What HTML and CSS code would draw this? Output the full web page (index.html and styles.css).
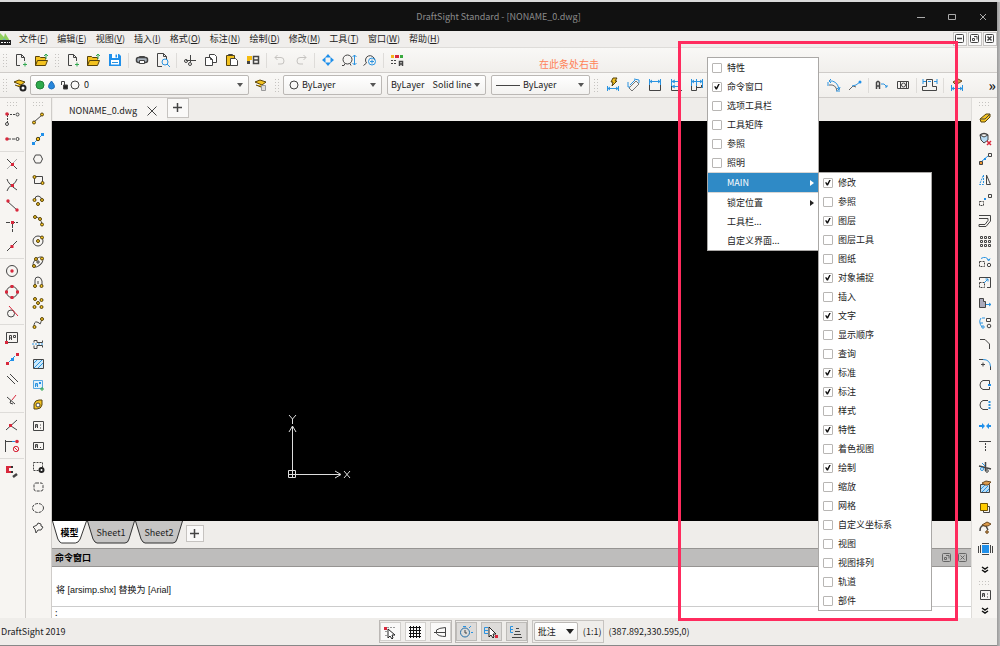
FILE: index.html
```html
<!DOCTYPE html>
<html lang="zh-CN">
<head>
<meta charset="utf-8">
<title>DraftSight Standard - [NONAME_0.dwg]</title>
<link rel="stylesheet" href="styles.css">
</head>
<body>
<div class="desktop">
<div class="app">
  <header class="titlebar">
    <h1>DraftSight Standard - [NONAME_0.dwg]</h1>
    <div class="win-buttons">
      <button aria-label="最小化"><svg viewBox="0 0 16 16"><path d="M4 8.500h8"/></svg></button>
      <button aria-label="最大化"><svg viewBox="0 0 16 16"><path d="M4.500 5.500h7v5h-7z"/></svg></button>
      <button aria-label="关闭"><svg viewBox="0 0 16 16"><path d="M5 5l6 6M11 5l-6 6"/></svg></button>
    </div>
  </header>

  <nav class="menubar">
    <svg class="logo" viewBox="0 0 12 14"><path fill="#8fcf5c" stroke="none" d="M0 1l4 4 1-4 5 8H0z"/><path fill="#62a7d8" stroke="none" d="M4 6l3 4H2z"/><rect x="0" y="8" width="11" height="5" fill="#222" stroke="none"/><path stroke="#fff" d="M1 10.500h2m1 0h2m1 0h1m1 0h1"/></svg>
    <div class="menus"><button>文件(<u>F</u>)</button><button>编辑(<u>E</u>)</button><button>视图(<u>V</u>)</button><button>插入(<u>I</u>)</button><button>格式(<u>O</u>)</button><button>标注(<u>N</u>)</button><button>绘制(<u>D</u>)</button><button>修改(<u>M</u>)</button><button>工具(<u>T</u>)</button><button>窗口(<u>W</u>)</button><button>帮助(<u>H</u>)</button></div>
    <div class="doc-buttons">
      <button aria-label="最小化文档"><svg viewBox="0 0 10 10"><rect x=".5" y=".5" width="8" height="8" rx="1"/><path d="M2 4.500h5" stroke-width="1.500"/></svg></button>
      <button aria-label="还原文档"><svg viewBox="0 0 10 10"><rect x=".5" y=".5" width="8" height="8" rx="1"/><path d="M4 2.500h3v3M2.500 4.500h2v2h-2z"/></svg></button>
      <button aria-label="关闭文档"><svg viewBox="0 0 10 10"><rect x=".5" y=".5" width="8" height="8" rx="1"/><path d="M2.500 2.500l4 4m0-4l-4 4" stroke-width="1.500"/></svg></button>
    </div>
  </nav>

  <div class="toolbar std" role="toolbar" aria-label="标准">
    <i class="grip"></i>
    <button class="tool" aria-label="新建图纸"><svg viewBox="0 0 16 16"><path d="M7 13.500H3.500v-11h5l3 3V9M8.500 2.500v3h3"/><path class="n" d="M10 12.500h4m-2-2v4"/></svg></button>
    <button class="tool" aria-label="打开图纸"><svg viewBox="0 0 16 16"><path class="fy" d="M1.500 13.500v-9h4l1 1h5v2M1.500 13.500l2-5h10l-2 5z"/><path class="n" d="M12 7V2m-2 2l2-2 2 2"/></svg></button>
    <i class="grip"></i>
    <button class="tool" aria-label="新建"><svg viewBox="0 0 16 16"><path d="M7 13.500H3.500v-11h5l3 3V9M8.500 2.500v3h3"/><path class="n" d="M10 12.500h4m-2-2v4"/></svg></button>
    <button class="tool" aria-label="打开"><svg viewBox="0 0 16 16"><path class="fy" d="M1.500 13.500v-9h4l1 1h5v2M1.500 13.500l2-5h10l-2 5z"/><path class="n" d="M12 7V2m-2 2l2-2 2 2"/></svg></button>
    <button class="tool" aria-label="保存"><svg viewBox="0 0 16 16"><path class="fb" d="M2 2h10l2 2v10H2z"/><path class="fw" d="M5 2h6v4H5zM4 8h8v4.500H4z"/><path class="fb" d="M8.500 2.500h1.500v3H8.500z"/><path class="b" d="M5 10.500h6"/></svg></button>
    <i class="sep"></i>
    <button class="tool" aria-label="打印"><svg viewBox="0 0 16 16"><path d="M5.500 6V4.500h5V6"/><rect x="2.500" y="5.500" width="11" height="5" rx="2" fill="#a9b3bd" stroke-width="1.500"/><path fill="#fff" d="M5.500 8.500h5v3h-5z"/></svg></button>
    <button class="tool" aria-label="打印预览"><svg viewBox="0 0 16 16"><path d="M7 14.500H2.500v-13h6l3 3V7M8.500 1.500v3h3"/><circle class="b" cx="10" cy="10" r="3"/><path class="b" d="M12 12l3 3"/></svg></button>
    <i class="sep"></i>
    <button class="tool" aria-label="剪切"><svg viewBox="0 0 16 16"><path d="M8.500 3v7M4 8.500h10"/><circle cx="4" cy="9" r="1.500"/><circle cx="8" cy="12" r="1.500"/></svg></button>
    <button class="tool" aria-label="复制"><svg viewBox="0 0 16 16"><path fill="#fff" d="M6.500 2.500h5l2 2v6h-7z"/><path fill="#fff" d="M2.500 5.500h5l2 2v6h-7z"/><path d="M7.500 5.500v2h2"/></svg></button>
    <button class="tool" aria-label="粘贴"><svg viewBox="0 0 16 16"><path class="fy" d="M2.500 3.500h8v10h-8z"/><path d="M4.500 4V2.500h4V4"/><path fill="#fff" d="M6.500 6.500h5l2 2v5h-7z"/></svg></button>
    <button class="tool" aria-label="特性涂刷"><svg viewBox="0 0 16 16"><path fill="#f4bb10" stroke="none" d="M2 4h5v4H5v4H2z"/><path fill="#444" stroke="none" d="M2 9h3v3H2z"/><path d="M8.500 4.500h5v7h-5zM8.500 8h5" stroke-width="1.500"/></svg></button>
    <i class="sep"></i>
    <button class="tool off" aria-label="撤消"><svg viewBox="0 0 16 16"><path d="M3 5.500h6q3 0 3 3.500t-3 3H6M5.500 3L3 5.500 5.500 8"/></svg></button>
    <button class="tool off" aria-label="重做"><svg viewBox="0 0 16 16"><path d="M13 5.500H7q-3 0-3 3.500t3 3h3M10.500 3L13 5.500 10.500 8"/></svg></button>
    <i class="sep"></i>
    <button class="tool" aria-label="平移"><svg viewBox="0 0 16 16"><path class="fb" d="M8 2l3 3.500H5zM8 14l3-3.500H5zM2 8l3.500-3v6zM14 8l-3.500-3v6z"/></svg></button>
    <button class="tool" aria-label="动态缩放"><svg viewBox="0 0 16 16"><circle cx="6.500" cy="7.500" r="4.500"/><path d="M1 13.500h2l1-2m5 0l1 2"/><path class="b" d="M13.500 3v10m-2-8l2-2 2 2m-4 6l2 2 2-2"/></svg></button>
    <button class="tool" aria-label="缩放"><svg viewBox="0 0 16 16"><path d="M4.500 11a4.500 4.500 0 1 1 8-3M1.500 13.500l3-2.500"/><circle class="b" cx="10" cy="9.500" r="3.500"/><path class="b" d="M8 9.500h4m-2-2v4"/></svg></button>
    <i class="sep"></i>
    <button class="tool" aria-label="特性"><svg viewBox="0 0 16 16"><path fill="#f4b51b" stroke="none" d="M2 3h3v3H2z"/><path class="fr" d="M6 3h4v3H6z"/><path fill="#39a93e" stroke="none" d="M11 3h3v3h-3z"/><path class="d" d="M2 8.500h6M2 11.500h5"/><path d="M10.500 14V9.500h3V14m-3-2h3" stroke-width="1.500"/></svg></button>
    <span class="hint">在此条处右击</span>
  </div>

  <div class="toolbar props" role="toolbar" aria-label="特性">
    <i class="grip"></i>
    <button class="tool" aria-label="图层管理器"><svg viewBox="0 0 16 16"><path class="fy" d="M2 5l5-2 6 2-4 3zM3 8l5 2 3-2"/><circle cx="11" cy="11" r="2.500" fill="#fff" stroke="#222" stroke-width="2"/></svg></button>
    <div class="combo layer">
      <svg class="layer-state" viewBox="0 0 50 14"><circle cx="6" cy="7" r="4" fill="#2eaa4c" stroke="#218038"/><path d="M17.500 3q6 7 0 8-6-1 0-8z" fill="#2787dc" stroke="#1b6cb8"/><path d="M27.500 7V3.500h3V7"/><path fill="#222" d="M29.500 7h4v4h-4z"/><circle cx="41" cy="7" r="4"/></svg>
      <select aria-label="图层"><option>0</option></select>
    </div>
    <button class="tool" aria-label="图层状态"><svg viewBox="0 0 16 16"><path class="fy" d="M2 5l5-2 6 2-4 3zM3 8l5 2 2-2"/><path fill="#ddd" stroke="#999" d="M8.500 8.500h4v5h-4z"/></svg></button>
    <i class="grip"></i>
    <div class="combo"><svg class="dot" viewBox="0 0 10 10"><circle cx="5" cy="5" r="4"/></svg><select aria-label="线条颜色"><option>ByLayer</option></select></div>
    <div class="combo"><select aria-label="线条样式"><option>ByLayer &nbsp;&nbsp; Solid line</option></select></div>
    <div class="combo"><svg class="line" viewBox="0 0 24 10"><path d="M0 5.500h24"/></svg><select aria-label="线宽"><option>ByLayer</option></select></div>
    <i class="grip"></i>
    <button class="tool" aria-label="智能标注"><svg viewBox="0 0 16 16"><path class="fy" d="M8 1h4l-2 3h2l-5 5 1-4H6z"/><path class="b" d="M2.500 9v5m11-5v5M3 11.500h10M5 10l-2 1.500L5 13m6-3l2 1.500-2 1.500"/></svg></button>
    <button class="tool" aria-label="对齐标注"><svg viewBox="0 0 16 16"><path d="M3 11l7-7 3 3-7 7z" stroke="#777"/><path class="b" d="M2 5v5h2M8 2l5 1v3M4 8l5-5"/></svg></button>
    <button class="tool" aria-label="线性标注"><svg viewBox="0 0 16 16"><path d="M2.500 7v6.500h11V7"/><path class="b" d="M2.500 2v6m11-6v6M3 4.500h10M5 3L3 4.500 5 6m6-3l2 1.500L11 6"/></svg></button>
    <button class="tool" aria-label="基线标注"><svg viewBox="0 0 16 16"><path d="M3.500 8v5.500H14"/><path class="b" d="M3.500 2v7M4 4.500h9M4 9.500h9M7 3L4 4.500 7 6m0 2L4 9.500 7 11"/></svg></button>
    <button class="tool" aria-label="连续标注"><svg viewBox="0 0 16 16"><path d="M2.500 8v5.500h5V8m0 2.500h5V8"/><path class="b" d="M2.500 2v7m5-7v7m6-7v9M3 4.500h10M5 3L3 4.500 5 6m6-3l2 1.500L11 6"/></svg></button>
    <div class="toolbar-end">
      <button class="tool" aria-label="弧长"><svg viewBox="0 0 16 16"><path d="M3 8q7-1 8 6" stroke="#666"/><path class="b" d="M3 4q8-1 10 8M5 2L3 4l2 2m6 5l2 2 1-3M2 5v4m8 5h4"/></svg></button>
      <button class="tool" aria-label="折弯"><svg viewBox="0 0 16 16"><path d="M2 13l4-4 3 1" stroke="#666"/><path class="b" d="M5 9l4-1 4-3"/><circle class="fb" cx="13" cy="5" r="1.500"/></svg></button>
      <i class="sep"></i>
      <button class="tool" aria-label="引线"><svg viewBox="0 0 16 16"><path d="M2.500 12V5.500l1-1h1l1 1V12m-3-3h3" stroke-width="1.500"/><path class="b" d="M7 7h3l3 3m-2 0h2V8"/></svg></button>
      <button class="tool" aria-label="形位公差"><svg viewBox="0 0 16 16"><path d="M2.500 4.500h11v7h-11zM5.500 4.500v7m6-7v7"/><circle cx="8.500" cy="8" r="2"/></svg></button>
      <i class="sep"></i>
      <button class="tool wide" aria-label="坐标标注"><svg viewBox="0 0 18 16"><path d="M1.500 13.500v-4h4v-7h6v7h4v4z"/><path class="b" d="M2 2v5m14-5v5M2 4.500h3m8 0h3M7 4.500h3"/></svg></button>
      <i class="sep"></i>
      <button class="tool" aria-label="编辑标注"><svg viewBox="0 0 16 16"><path class="fo" d="M4 5l5-3 4 2-3 2-4 1z"/><path class="b" d="M2.500 8v6m11-6v6M3 11.500h10M5 10l-2 1.500L5 13m6-3l2 1.500-2 1.500"/></svg></button>
      <button class="more" aria-label="更多">»</button>
    </div>
  </div>

  <main class="workspace">
    <div class="rail snap" role="toolbar" aria-label="对象捕捉">
      <i class="grip"></i>
      <div class="group">
        <button class="tool" aria-label="自"><svg viewBox="0 0 16 16"><path class="d" d="M3 4.500h9M3.500 5v8"/><circle class="fr" cx="3" cy="4" r="1.800"/><circle cx="13.500" cy="4.500" r="1.500"/><circle cx="3" cy="14" r="1.500"/></svg></button>
        <button class="tool" aria-label="临时追踪"><svg viewBox="0 0 16 16"><path d="M4 8h8" stroke-dasharray="3 1"/><circle class="fr" cx="3" cy="8" r="1.800"/><circle cx="13.500" cy="8" r="1.500"/></svg></button>
      </div>
      <div class="group">
        <button class="tool" aria-label="交点"><svg viewBox="0 0 16 16"><path d="M3 3l10 10"/><path stroke="#aaa" d="M13 3L3 13"/><path class="fr" d="M7 7h3v3H7z"/></svg></button>
        <button class="tool" aria-label="外观交点"><svg viewBox="0 0 16 16"><path d="M3 2q1 5 10 11M13 2q-1 4-5 6t-5 6"/><path class="fr" d="M7 7h3v3H7z"/></svg></button>
        <button class="tool" aria-label="端点"><svg viewBox="0 0 16 16"><path d="M3 4l10 9"/><circle class="fr" cx="4" cy="4" r="1.700"/><circle class="fr" cx="13" cy="13" r="1.700"/></svg></button>
        <button class="tool" aria-label="中点"><svg viewBox="0 0 16 16"><path d="M2 4.500h12M8.500 6v8" stroke-dasharray="4 1"/><path class="fr" d="M7 3h3v3H7z"/></svg></button>
        <button class="tool" aria-label="最近点"><svg viewBox="0 0 16 16"><path d="M3 13L13 3"/><path class="fr" d="M6.500 7h3v3h-3z"/></svg></button>
      </div>
      <div class="group">
        <button class="tool" aria-label="中心"><svg viewBox="0 0 16 16"><circle cx="8" cy="8" r="5.500"/><circle class="fr" cx="8" cy="8" r="1.700"/></svg></button>
        <button class="tool" aria-label="象限点"><svg viewBox="0 0 16 16"><circle cx="8" cy="8" r="5.500"/><path class="fr" d="M6.500 1h3v3h-3zM6.500 12h3v3h-3zM1 6.500h3v3H1zM12 6.500h3v3h-3z"/></svg></button>
        <button class="tool" aria-label="切点"><svg viewBox="0 0 16 16"><circle cx="7" cy="9.500" r="3.500"/><path class="r" d="M5 2l9 10"/></svg></button>
      </div>
      <div class="group late">
        <button class="tool" aria-label="插入点"><svg viewBox="0 0 16 16"><path d="M2.500 2.500h11v10h-11zM5.500 10V5.500h2V10m-2-2h2M9.500 5.500h2v2h-2z"/><path class="fr" d="M1 11h3v3H1z"/></svg></button>
        <button class="tool" aria-label="两点中点"><svg viewBox="0 0 16 16"><path class="b" d="M5 11l6-6"/><path class="fr" d="M2 11h3v3H2zM12 2h3v3h-3z"/><path class="fb" d="M7 7h3v3H7z"/></svg></button>
        <button class="tool" aria-label="平行"><svg viewBox="0 0 16 16"><path d="M3 5l8 8M6 3l8 8"/></svg></button>
        <button class="tool" aria-label="垂足"><svg viewBox="0 0 16 16"><path d="M3 5l8 7M7 8l-1 3 3 1"/><path class="r" d="M8 8l4-5"/></svg></button>
      </div>
      <div class="group">
        <button class="tool" aria-label="节点"><svg viewBox="0 0 16 16"><path d="M2 13l11-10M7 9l6 4"/><path class="fr" d="M5 7h3v3H5z"/></svg></button>
        <button class="tool" aria-label="无捕捉"><svg viewBox="0 0 16 16"><path d="M1.500 2v12M2 3.500h6"/><path class="b" d="M8 3.500h3"/><circle class="fr" cx="13" cy="3.500" r="1.800"/><circle class="r" cx="12" cy="11" r="2.700"/><path class="r" d="M10 9l4 4"/></svg></button>
      </div>
      <div class="group">
        <button class="tool" aria-label="捕捉设置"><svg viewBox="0 0 16 16"><path class="fr" d="M2 3h5v2H5v3h2v2H2z"/><path fill="#333" stroke="none" d="M7 3h2v2H7zM7 8h2v2H7z"/><path d="M9 14l4-3" stroke-width="2.500"/></svg></button>
      </div>
    </div>

    <div class="rail draw" role="toolbar" aria-label="绘制">
      <i class="grip"></i>
      <div class="group">
        <button class="tool" aria-label="直线"><svg viewBox="0 0 16 16"><path d="M4 12l8-7"/><circle class="fy" cx="4" cy="12.500" r="1.500"/><circle class="fy" cx="12" cy="4.500" r="1.500"/></svg></button>
        <button class="tool" aria-label="构造线"><svg viewBox="0 0 16 16"><path class="b" d="M3 13L13 3"/><path class="fb" d="M2 11h3v3H2zM11 2h3v3h-3z"/><circle class="fy" cx="8" cy="8" r="1.700"/></svg></button>
        <button class="tool" aria-label="多边形"><svg viewBox="0 0 16 16"><path d="M5.500 4h5l2 4-2 4h-5l-2-4z"/></svg></button>
        <button class="tool" aria-label="矩形"><svg viewBox="0 0 16 16"><path d="M4.500 4.500h8v7h-8z"/><circle class="fy" cx="4.500" cy="5" r="1.500"/><circle class="fy" cx="12.500" cy="11" r="1.500"/></svg></button>
        <button class="tool" aria-label="圆弧"><svg viewBox="0 0 16 16"><path d="M5 7q0-3 3-3t4 4"/><circle class="fy" cx="4.500" cy="8" r="1.500"/><circle class="fy" cx="12" cy="8" r="1.500"/><circle class="fy" cx="8" cy="12" r="1.500"/></svg></button>
        <button class="tool" aria-label="三点弧"><svg viewBox="0 0 16 16"><path d="M5 4q6 0 7 8"/><circle class="fy" cx="5" cy="4" r="1.500"/><circle class="fy" cx="10" cy="6" r="1.500"/><circle class="fy" cx="12" cy="11.500" r="1.500"/></svg></button>
        <button class="tool" aria-label="圆"><svg viewBox="0 0 16 16"><circle cx="8" cy="8" r="5"/><circle class="fy" cx="8" cy="8" r="1.500"/><circle class="fy" cx="12" cy="4.500" r="1.500"/></svg></button>
        <button class="tool" aria-label="椭圆"><svg viewBox="0 0 16 16"><ellipse cx="8" cy="8" rx="6" ry="3.500" transform="rotate(-45 8 8)"/><circle class="fy" cx="6" cy="5" r="1.500"/><circle class="fy" cx="12" cy="4.500" r="1.500"/><circle class="fy" cx="4" cy="12" r="1.500"/><path d="M6 8h4M8 6v4"/></svg></button>
        <button class="tool" aria-label="椭圆弧"><svg viewBox="0 0 16 16"><path d="M5 11V6q0-3 3-3t4 4v4M8 10V7"/><circle class="fy" cx="5" cy="12" r="1.500"/><circle class="fy" cx="11.500" cy="12" r="1.500"/></svg></button>
        <button class="tool" aria-label="点"><svg viewBox="0 0 16 16"><circle class="fy" cx="5" cy="4" r="1.500"/><circle class="fy" cx="11.500" cy="5" r="1.500"/><circle class="fy" cx="8" cy="8" r="1.500"/><circle class="fy" cx="4.500" cy="12" r="1.500"/><circle class="fy" cx="11.500" cy="12" r="1.500"/></svg></button>
        <button class="tool" aria-label="样条曲线"><svg viewBox="0 0 16 16"><path d="M4 12q0-6 3-5t3 2 2-5"/><circle class="fy" cx="4.500" cy="12" r="1.500"/><circle class="fy" cx="12" cy="4" r="1.500"/></svg></button>
        <button class="tool" aria-label="多线"><svg viewBox="0 0 16 16"><path d="M4 6.500V4.500h3v2h5.500v-2M4 9.500v3h3v-3h5.500v2"/><path class="b d" d="M2 8h12"/></svg></button>
        <button class="tool" aria-label="填充"><svg viewBox="0 0 16 16"><path fill="#cde9fa" d="M3.500 3.500h10v9h-10z"/><path class="b" d="M4 7l3-3M4 12l8-8M8 12l5-5"/></svg></button>
        <button class="tool" aria-label="图块"><svg viewBox="0 0 16 16"><path stroke="#58a6df" fill="#e1f1fb" d="M3.500 3.500h9v8h-9z"/><path class="b" d="M5.500 10V6.500h2V10m-2-2h2"/><path class="fb" d="M9 5h2v2H9z"/><path class="n" d="M10 12h4m-2-2v4"/></svg></button>
        <button class="tool" aria-label="区域"><svg viewBox="0 0 16 16"><path class="fy" d="M4 12V7q1-4 5-4h3v5q-1 4-5 4z"/><circle fill="#fff" cx="8" cy="8" r="2"/></svg></button>
        <button class="tool" aria-label="注释"><svg viewBox="0 0 16 16"><path d="M3.500 3.500h10v9h-10zM5.500 10V6.500h2V10m-2-2h2M10 7h1m-1 3h1"/></svg></button>
        <button class="tool" aria-label="简单注释"><svg viewBox="0 0 16 16"><path d="M3.500 4.500h10v7h-10zM5.500 10V6.500h2V10m-2-2h2M10 9.500h1"/></svg></button>
        <button class="tool" aria-label="遮盖"><svg viewBox="0 0 16 16"><path class="d" d="M3.500 3.500h9v8h-9z"/><circle cx="11.500" cy="11" r="2" fill="#fff" stroke="#222" stroke-width="2"/></svg></button>
        <button class="tool" aria-label="矩形云线"><svg viewBox="0 0 16 16"><rect x="4" y="4" width="9" height="8" rx="2" stroke-dasharray="3 1"/></svg></button>
        <button class="tool" aria-label="椭圆云线"><svg viewBox="0 0 16 16"><ellipse cx="8" cy="8" rx="5.500" ry="4.500" stroke-dasharray="3 1"/></svg></button>
        <button class="tool" aria-label="徒手云线"><svg viewBox="0 0 16 16"><path d="M3 7l4-2 1-2 3 1v2l2 1-2 3H8l-2 3-1-4z"/></svg></button>
      </div>
    </div>

    <section class="center">
      <div class="doc-tabs">
        <div class="doc-tab"><span>NONAME_0.dwg</span><button aria-label="关闭标签"><svg viewBox="0 0 12 12"><path d="M1.500 1.500l9 9m0-9l-9 9"/></svg></button></div>
        <button class="add" aria-label="新建标签"><svg viewBox="0 0 12 12"><path d="M1 5.500h9M5.500 1v9" stroke-width="1.500"/></svg></button>
      </div>
      <div class="canvas">
        <svg class="axes" viewBox="0 0 66 66"><path d="M1.500 56.500h7v7h-7zM5.500 56V12M9 60.500h44M1.500 60.500h7M5.500 56v8M2 18l3.500-6L9 18M48 57l6 3.500-6 3.500M2 1l3.500 4L9 1M5.500 5v5M57 57l6 7M63 57l-6 7"/></svg>
      </div>
      <div class="sheets">
        <button class="sheet active"><svg viewBox="0 0 36 23" preserveAspectRatio="none"><path d="M.5 0L6 18q2 4 4 4h14q3 0 5-4L35.500 0"/></svg><span>模型</span></button>
        <button class="sheet"><svg viewBox="0 0 48 23" preserveAspectRatio="none"><path d="M.5 0L6 18q2 4 4 4h28q3 0 4-4L47.500 0"/></svg><span>Sheet1</span></button>
        <button class="sheet"><svg viewBox="0 0 48 23" preserveAspectRatio="none"><path d="M.5 0L6 18q2 4 4 4h28q3 0 4-4L47.500 0"/></svg><span>Sheet2</span></button>
        <button class="add small" aria-label="新建图纸页"><svg viewBox="0 0 12 12"><path d="M1 5.500h9M5.500 1v9" stroke-width="1.500"/></svg></button>
      </div>
      <div class="command">
        <div class="command-head"><h2>命令窗口</h2>
          <button aria-label="浮动"><svg viewBox="0 0 10 10"><rect x=".5" y=".5" width="8" height="8" rx="1"/><path d="M4 2.500h3v3M2.500 4.500h2v2h-2z"/></svg></button>
          <button aria-label="关闭命令窗口"><svg viewBox="0 0 10 10"><rect x=".5" y=".5" width="8" height="8" rx="1"/><path d="M2.500 2.500l4 4m0-4l-4 4"/></svg></button>
        </div>
        <p class="log">将 [arsimp.shx] 替换为 [Arial]</p>
        <label class="prompt">:<input type="text" aria-label="命令"></label>
      </div>
    </section>

    <div class="rail modify" role="toolbar" aria-label="修改">
      <i class="grip"></i>
      <div class="group">
        <button class="tool" aria-label="删除"><svg viewBox="0 0 16 16"><path class="fy" d="M3 9l6-5h4v3l-5 5H4z"/><path d="M4 9h4l5-5"/></svg></button>
        <button class="tool" aria-label="清理"><svg viewBox="0 0 16 16"><path fill="#b8dcf5" d="M3 4l4 2 4-2v5l-4 3-3-3z"/><path d="M3 4q4-3 8 0" stroke-width="1.500"/><path class="r" d="M10 10l4 4m0-4l-4 4" stroke-width="1.500"/></svg></button>
        <button class="tool" aria-label="移动"><svg viewBox="0 0 16 16"><path class="b" d="M5 10l6-5"/><path fill="#ef9631" d="M2.500 10.500h3v3h-3z"/><path d="M11.500 2.500h3v3h-3z"/><path class="fb" d="M7 7h2v2H7z"/></svg></button>
        <button class="tool" aria-label="镜像"><svg viewBox="0 0 16 16"><path d="M9.500 3v9.500h4z"/><path class="b d" d="M6.500 3v9.500h-4z"/></svg></button>
        <button class="tool" aria-label="复制对象"><svg viewBox="0 0 16 16"><path class="d" d="M2.500 9.500h4v4h-4z"/><path d="M11.500 2.500h3v3h-3z"/><path class="fb" d="M7 6h2v2H7z"/></svg></button>
        <button class="tool" aria-label="偏移"><svg viewBox="0 0 16 16"><path d="M2 2.500h11.500V8L9 13.500H2v-2h6l3-4v-2H2"/></svg></button>
        <button class="tool" aria-label="阵列"><svg viewBox="0 0 16 16"><path d="M3.500 3.500h2v2h-2zM7.500 3.500h2v2h-2zM11.500 3.500h2v2h-2zM3.500 7.500h2v2h-2zM7.500 7.500h2v2h-2zM11.500 7.500h2v2h-2zM3.500 11.500h2v2h-2zM7.500 11.500h2v2h-2zM11.500 11.500h2v2h-2z"/></svg></button>
        <button class="tool" aria-label="旋转"><svg viewBox="0 0 16 16"><path class="d" d="M2.500 7.500h5v5h-5z"/><path class="b" d="M4 4.500q5-3 8 2m-2-1l2 1 1-2"/><circle cx="12" cy="11" r="1.700"/></svg></button>
        <button class="tool" aria-label="缩放对象"><svg viewBox="0 0 16 16"><path d="M2.500 6V3.500h11v10H10"/><path class="d" d="M2.500 8.500h5v5h-5z"/><path class="b" d="M7 9l4-4M8.500 5H11v2.500"/></svg></button>
        <button class="tool" aria-label="拉伸"><svg viewBox="0 0 16 16"><path fill="#aab" d="M2.500 3.500h4v3h2v6h-6z"/><path class="b" d="M9 9.500h5M12 8l2 1.500-2 1.500"/></svg></button>
        <button class="tool" aria-label="环形阵列"><svg viewBox="0 0 16 16"><path class="b" d="M4 3q-3 4 1 9M3 8h3M5 3h3"/><path d="M9.500 3.500h4v3h-4z"/><circle cx="12" cy="11" r="1.800"/><circle class="b" cx="6" cy="12" r="1.200"/></svg></button>
        <button class="tool" aria-label="倒角"><svg viewBox="0 0 16 16"><path d="M3 3.500h5l4.500 4.500v5"/></svg></button>
        <button class="tool" aria-label="圆角"><svg viewBox="0 0 16 16"><path d="M2 3.500h4M4 8.500h4M6 6.500v4M13.500 10v4"/><path class="b" d="M6 3.500q7 0 7.500 7"/></svg></button>
        <button class="tool" aria-label="打断"><svg viewBox="0 0 16 16"><path d="M12.500 7V3.500H6q-3 1-3 4.500t3 4.500h6.500V10"/><path class="fb" d="M11 7h3v2h-3z"/></svg></button>
        <button class="tool" aria-label="分割"><svg viewBox="0 0 16 16"><path d="M11 3.500H6q-3 1-3 4.500t3 4.500h5"/><path class="b" d="M12.500 4v8" stroke-width="2" stroke-dasharray="2 1"/></svg></button>
        <button class="tool" aria-label="合并"><svg viewBox="0 0 16 16"><path class="fb" d="M2 7h3V5l3 3-3 3V9H2zM14 7h-2V5L9 8l3 3V9h2z"/></svg></button>
        <button class="tool" aria-label="延伸"><svg viewBox="0 0 16 16"><path d="M2 3.500h12"/><path d="M8.500 5v9" stroke-dasharray="2 1"/></svg></button>
        <button class="tool" aria-label="剪裁"><svg viewBox="0 0 16 16"><path d="M2 7l12 3M8.500 3v9" stroke-width="1.500"/><circle class="b" cx="5" cy="10" r="1.500"/><path class="b" d="M5 4l3 3"/><circle cx="10" cy="12" r="1.300"/></svg></button>
        <button class="tool" aria-label="编辑填充"><svg viewBox="0 0 16 16"><path fill="#b8dcf5" d="M3.500 5.500h9v8h-9z"/><path class="b" d="M4 10l4-4M5 13l6-6M9 13l3-3"/><path class="fo" d="M5 4l4-2 5 1-3 3H8z"/></svg></button>
        <button class="tool" aria-label="前置"><svg viewBox="0 0 16 16"><path d="M6.500 6.500h6v6h-6z"/><path fill="#fc0" stroke="#755600" d="M3.500 3.500h7v7h-7z"/></svg></button>
        <button class="tool" aria-label="编辑折线"><svg viewBox="0 0 16 16"><path d="M3 11q0-7 6-5l2 4" stroke-width="1.500"/><path class="fo" d="M5 5l5-3 4 2-3 2H8z"/><circle class="fo" cx="10" cy="12" r="1.300"/></svg></button>
        <button class="tool" aria-label="更改空间"><svg viewBox="0 0 16 16"><path class="fb" d="M5 4h7v8H5z"/><path d="M3.500 4v8m10-8v8M5 2.500h7m-7 11h7M1.500 5v7M15.500 5v7"/></svg></button>
      </div>
      <button class="more down" aria-label="更多修改工具"><svg viewBox="0 0 8 8"><path d="M1 1l3 2 3-2M1 4l3 2 3-2"/></svg></button>
      <i class="grip tight"></i>
      <button class="tool" aria-label="文字"><svg viewBox="0 0 16 16"><path d="M3.500 3.500h10v9h-10zM5.500 10V6.500h2V10m-2-2h2M10 7h1m-1 3h1"/></svg></button>
      <button class="more down short" aria-label="更多文字工具"><svg viewBox="0 0 8 8"><path d="M1 1l3 2 3-2M1 4l3 2 3-2"/></svg></button>
    </div>
  </main>

  <footer class="status">
    <span class="product">DraftSight 2019</span>
    <div class="toggles">
      <button aria-label="捕捉"><svg viewBox="0 0 16 16"><path class="d" stroke="#999" d="M2 3.500h11M3 7.500h3M3 11.500h3"/><path fill="#fff" stroke="#222" d="M6 5v9l2-2 2 3 1-1-1-3h3z"/><path class="fr" d="M2 3h3v3H2z"/></svg></button>
      <button aria-label="栅格"><svg viewBox="0 0 16 16"><path stroke="#111" d="M2 3.500h12M2 6.500h12M2 9.500h12M2 12.500h12M3.500 2v12M6.500 2v12M9.500 2v12M12.500 2v12"/></svg></button>
      <button aria-label="正交"><svg viewBox="0 0 16 16"><path d="M14 8.500H2M13.500 3.500v9q-7 0-9-3V6q2-2 9-2.500z"/></svg></button>
    </div>
    <div class="toggles on">
      <button aria-label="极轴"><svg viewBox="0 0 16 16"><circle cx="7" cy="8.500" r="4.500" stroke="#256fa8"/><path d="M7 6v3h2"/><path class="b" d="M5 2.500h3M11 4l2-2M13 8.500h2"/></svg></button>
      <button aria-label="实体捕捉"><svg viewBox="0 0 16 16"><path class="b" d="M5 3.500H1.500v6H5M2 6.500h3"/><path fill="#fff" stroke="#222" d="M6 3v10l2-2 2 3 1-1-1-3h3z"/><path class="fr" d="M12 11h3v3h-3z"/></svg></button>
      <button aria-label="实体追踪"><svg viewBox="0 0 16 16"><path class="b" d="M5 2.500H2.500v6H5M3 5.500h2"/><path d="M8 4.500h3M7 7.500h5M6 10.500h7M4 13.500h10"/></svg></button>
    </div>
    <div class="scale"><div class="combo"><select aria-label="批注比例"><option>批注</option></select></div><span>(1:1)</span></div>
    <span class="coords">(387.892,330.595,0)</span>
  </footer>
</div>

<div class="highlight"></div>

<div class="popup main-popup" role="menu">
  <label><input type="checkbox">特性</label>
  <label><input type="checkbox" checked>命令窗口</label>
  <label><input type="checkbox">选项工具栏</label>
  <label><input type="checkbox">工具矩阵</label>
  <label><input type="checkbox">参照</label>
  <label><input type="checkbox">照明</label>
  <hr>
  <button class="selected has-sub">MAIN</button>
  <hr>
  <button class="has-sub">锁定位置</button>
  <button>工具栏...</button>
  <button>自定义界面...</button>
</div>
<div class="popup sub-popup" role="menu">
  <label><input type="checkbox" checked>修改</label>
  <label><input type="checkbox">参照</label>
  <label><input type="checkbox" checked>图层</label>
  <label><input type="checkbox">图层工具</label>
  <label><input type="checkbox">图纸</label>
  <label><input type="checkbox" checked>对象捕捉</label>
  <label><input type="checkbox">插入</label>
  <label><input type="checkbox" checked>文字</label>
  <label><input type="checkbox">显示顺序</label>
  <label><input type="checkbox">查询</label>
  <label><input type="checkbox" checked>标准</label>
  <label><input type="checkbox" checked>标注</label>
  <label><input type="checkbox">样式</label>
  <label><input type="checkbox" checked>特性</label>
  <label><input type="checkbox">着色视图</label>
  <label><input type="checkbox" checked>绘制</label>
  <label><input type="checkbox">缩放</label>
  <label><input type="checkbox">网格</label>
  <label><input type="checkbox">自定义坐标系</label>
  <label><input type="checkbox">视图</label>
  <label><input type="checkbox">视图排列</label>
  <label><input type="checkbox">轨道</label>
  <label><input type="checkbox">部件</label>
</div>
</div>
</body>
</html>
```
FILE: styles.css
```css
* { box-sizing: border-box; }
body {
  margin: 0;
  background: #a9a9a9;
  color: #222;
  font: 9px/14px "Noto Sans CJK SC", sans-serif;
}
button, input, select { font: inherit; color: inherit; margin: 0; }
button { border: 0; padding: 0; background: none; }
h1, h2, p { margin: 0; font: inherit; }
svg { display: block; fill: none; stroke: #444; stroke-width: 1; }

/* icon colours */
.b { stroke: #2a93e0; }
.r { stroke: #d8283c; }
.n { stroke: #35a853; }
.d { stroke-dasharray: 2 1; }
.fb { fill: #2090ea; stroke: none; }
.fr { fill: #d8283c; stroke: none; }
.fw { fill: #fff; stroke: none; }
.fy { fill: #f3c220; stroke: #57430c; }
.fo { fill: #dc9a4b; stroke: #6b4a22; }

.desktop {
  position: relative;
  min-height: 100vh;
  padding: 2px 3px 1px 0;
  background:
    linear-gradient(#dadada, #dadada) top / 100% 2px no-repeat,
    linear-gradient(90deg, #999, #bbb) right / 3px 100% no-repeat,
    #888;
}
.app { display: flex; flex-direction: column; min-height: calc(100vh - 3px); background: #efedea; }

.titlebar { position: relative; display: flex; align-items: center; justify-content: center; height: 29px; background: #111; color: #8c8c8c; }
.win-buttons { position: absolute; right: 6px; display: flex; gap: 15px; }
.win-buttons svg { width: 16px; height: 16px; stroke: #aaa; }

.menubar { display: flex; align-items: center; height: 16px; background: #f0eeec; }
.menubar .logo { width: 12px; height: 14px; margin-right: 3px; }
.menus { display: flex; justify-content: space-between; width: 43%; }
.menus button { padding: 0 4px; line-height: 16px; white-space: nowrap; }
.menubar u { text-underline-offset: 1px; }
.doc-buttons { display: flex; gap: 1px; margin-left: auto; }
.doc-buttons button { padding: 1px; border: 1px solid #c5c3c1; background: #fafafa; }
.doc-buttons svg { width: 10px; height: 10px; }

.toolbar { display: flex; align-items: center; height: 25px; border-bottom: 1px solid #cfccc9; background: linear-gradient(#f9f8f6, #f1efec); }
.std { height: 26px; border-top: 1px solid #dedcd9; }
.tool { display: flex; flex: none; align-items: center; justify-content: center; width: 21px; height: 20px; }
.tool svg { width: 16px; height: 16px; }
.tool.wide svg { width: 18px; }
.tool.off svg { stroke: #c5c3c0; }
.grip { flex: none; width: 5px; height: 14px; margin: 0 2px; background: radial-gradient(circle, #c6c4c1 1px, transparent 1px) 0 0 / 3px 3px; }
.sep { flex: none; width: 1px; height: 15px; margin: 0 2px 0 3px; background: #dedcd9; }
.std .grip + .tool { margin-left: 1px; }
.hint { margin-left: 132px; padding-top: 8px; color: #ff8257; font-size: 10px; }

.combo { position: relative; display: flex; align-items: center; width: 99px; height: 20px; padding-left: 3px; border: 1px solid #bbb8b5; border-radius: 2px; background: linear-gradient(#fff, #f3f2f0); }
.combo::after { content: ""; position: absolute; right: 5px; border: 3px solid transparent; border-top: 4px solid #555; border-bottom: 0; pointer-events: none; }
.combo select { flex: 1; min-width: 0; height: 18px; padding: 0; border: 0; background: none; appearance: none; }
.combo.layer { width: 219px; margin-right: 1px; }
.layer-state { width: 50px; height: 14px; }
.combo .dot { width: 10px; height: 10px; margin: 0 3px 0 2px; }
.combo .line { width: 24px; height: 10px; margin: 0 3px 0 1px; }
.combo + .combo { margin-left: 5px; }
.tool + .grip, .combo + .grip { margin: 0 4px 0 3px; }
.std .tool + .grip { margin: 0 2px; }
.toolbar-end { display: flex; align-items: center; margin-left: auto; }
.more { font-size: 14px; font-weight: 700; text-align: right; }
.toolbar-end .more { width: 30px; padding-right: 1px; }

.workspace { display: flex; flex: 1; }
.rail { display: flex; flex: none; flex-direction: column; align-items: center; width: 26px; padding-right: 1px; border-right: 1px solid #cfccc9; background: #f7f5f2; }
.rail .grip { width: 13px; height: 5px; margin: 3px 0 2px; }
.rail .grip.tight { margin: 0; }
.rail .tool { width: 24px; }
.group .tool:nth-of-type(even) { height: 21px; }
.snap .group + .group { border-top: 1px solid #dedcd9; margin-top: 2px; padding-top: 2px; }
.snap .group.late { padding-top: 3px; }
.modify { padding: 0; border: 0; border-left: 1px solid #dedcd9; }
.down { display: grid; place-items: center; width: 14px; height: 21px; }
.down svg { width: 8px; height: 8px; stroke: #111; stroke-width: 1.5; }
.down.short { height: 12px; }

.center { display: flex; flex: 1; flex-direction: column; min-width: 0; }
.doc-tabs { display: flex; height: 23px; padding-left: 1px; }
.doc-tab { display: flex; align-items: center; gap: 9px; padding: 2px 9px 0 16px; background: #f7f5f3; }
.doc-tab svg { width: 12px; height: 12px; }
.add { display: flex; align-items: center; justify-content: center; width: 22px; height: 20px; border: 1px solid #c6c3c0; background: #faf9f8; }
.add svg { width: 12px; height: 12px; }
.canvas { display: flex; flex: 1; align-items: flex-end; padding: 0 0 41px 235px; background: #000; }
.axes { width: 66px; height: 66px; stroke: #ddd; }
.sheets { display: flex; height: 27px; }
.sheet { position: relative; width: 48px; height: 23px; }
.sheet svg { position: absolute; inset: 0; width: 100%; height: 100%; fill: #c6c5c4; stroke: #333; }
.sheet span { position: relative; }
.sheet.active { width: 35px; font-weight: 700; color: #000; }
.sheet.active svg { fill: #fff; }
.add.small { width: 18px; height: 17px; margin: 4px 0 0 3px; }

.command { background: #fff; }
.command-head { display: flex; align-items: center; gap: 6px; height: 19px; padding: 0 3px; border: 1px solid #969492; border-width: 1px 0; background: #bebdbc; }
.command-head h2 { flex: 1; color: #000; font-weight: 700; }
.command-head svg { width: 10px; height: 10px; stroke: #666; }
.log { padding: 16px 4px 9px; border-bottom: 1px solid #ccc; color: #111; font: 9px/14px "Liberation Sans", "Noto Sans CJK SC", sans-serif; }
.prompt { display: flex; height: 11px; padding-left: 3px; line-height: 11px; }
.prompt input { flex: 1; height: 10px; border: 0; padding: 0 3px; background: none; outline: 0; }

.status { display: flex; align-items: center; height: 27px; }
.product { width: 38%; padding-left: 1px; }
.toggles { display: flex; gap: 4px; padding: 1px 0; border: 1px solid #bbb8b5; }
.toggles button { display: grid; place-items: center; width: 21px; height: 19px; border: 1px solid #d2d0cd; background: #faf9f8; }
.toggles svg { width: 16px; height: 16px; }
.toggles.on { margin: 0 4px 0 3px; }
.toggles.on button { background: #dddbd9; border-color: #bdbbb8; }
.scale { display: flex; align-items: center; gap: 5px; height: 23px; padding: 0 2px 0 1px; border: 1px solid #c6c3c0; }
.scale .combo { width: 44px; height: 19px; }
.scale .combo::after { right: 3px; border-width: 5px 4px 0; border-top-color: #222; }
.coords { margin-left: 4px; }

.highlight { position: absolute; left: 678px; top: 41px; width: 280px; height: 580px; border: 3px solid #ff2b5e; pointer-events: none; }

.popup { position: absolute; display: flex; flex-direction: column; border: 1px solid #aaa8a6; background: #fff; color: #222; }
.main-popup { left: 707px; top: 57px; width: 112px; }
.sub-popup { left: 818px; top: 172px; width: 114px; }
.popup label, .popup button { display: flex; align-items: center; height: 19px; }
.popup label { gap: 5px; padding-left: 4px; }
.popup button { position: relative; padding-left: 19px; }
.popup hr { width: 100%; height: 1px; margin: 0; border: 0; background: #d8d6d4; }
.popup input { position: relative; appearance: none; width: 10px; height: 10px; border: 1px solid #b8b6b4; border-radius: 1px; background: #fff; }
.popup input:checked::after { content: ""; position: absolute; inset: 1px; background: #111; clip-path: polygon(0 50%, 25% 45%, 40% 65%, 75% 0, 100% 0, 50% 100%, 30% 100%); }
.popup .selected { background: #2f8ac6; color: #fff; }
.has-sub::after { content: ""; position: absolute; right: 4px; border: 3px solid transparent; border-left: 4px solid currentColor; border-right: 0; }
```
